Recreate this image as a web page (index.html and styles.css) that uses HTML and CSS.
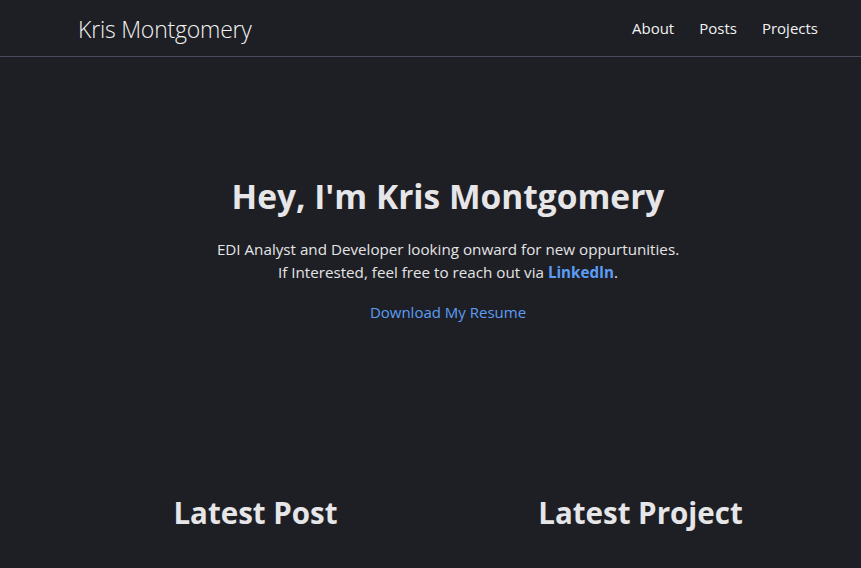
FILE: index.html
```html
<!DOCTYPE html>
<html lang="en">
<head>
<meta charset="utf-8">
<title>Kris Montgomery</title>
<link rel="stylesheet" href="styles.css">
</head>
<body>
<header class="site-header">
  <div class="container header-inner">
    <a class="brand" href="#">Kris Montgomery</a>
    <nav class="nav">
      <a href="#">About</a>
      <a href="#">Posts</a>
      <a href="#">Projects</a>
    </nav>
  </div>
</header>
<main class="container">
  <section class="hero">
    <h1>Hey, I'm Kris Montgomery</h1>
    <p class="intro">EDI Analyst and Developer looking onward for new oppurtunities.<br>If Interested, feel free to reach out via <a class="strong-link" href="#">LinkedIn</a>.</p>
    <p class="resume"><a href="#">Download My Resume</a></p>
  </section>
  <section class="latest">
    <h2>Latest Post</h2>
    <h2>Latest Project</h2>
  </section>
</main>
</body>
</html>
```
FILE: styles.css
```css
* { box-sizing: border-box; }
html, body {
  margin: 0;
  background: #1e1f24;
  color: #e4e4e6;
  font-family: "Open Sans", "Noto Sans", sans-serif;
  font-size: 16px;
}
a { text-decoration: none; color: inherit; }
.container {
  width: 740px;
  margin-left: 78px;
}
.site-header {
  border-bottom: 1px solid #4b4a5a;
}
.header-inner {
  height: 56px;
  display: flex;
  align-items: center;
  justify-content: space-between;
}
.brand {
  font-weight: 300;
  font-size: 23px;
  color: #f2f2f2;
  letter-spacing: -0.2px;
  position: relative;
  top: 1px;
}
.nav {
  display: flex;
  gap: 25px;
  font-size: 15px;
  color: #f2f2f2;
}
.hero {
  text-align: center;
  padding-top: 115px;
}
.hero h1 {
  margin: 0;
  font-size: 33.5px;
  font-weight: 700;
  line-height: 48px;
  color: #e6e6e8;
}
.intro {
  margin: 18px 0 0;
  line-height: 23px;
  font-size: 15.2px;
}
.strong-link { color: #5b9df5; font-weight: 700; }
.resume { margin: 17px 0 0; font-size: 15px; line-height: 23px; }
.resume a { color: #5b9df5; }
.latest {
  display: grid;
  grid-template-columns: 1fr 1fr;
  column-gap: 30px;
  text-align: center;
  margin-top: 168px;
}
.latest h2 {
  margin: 0;
  font-size: 29.5px;
  font-weight: 700;
  color: #e6e6e8;
}
```
